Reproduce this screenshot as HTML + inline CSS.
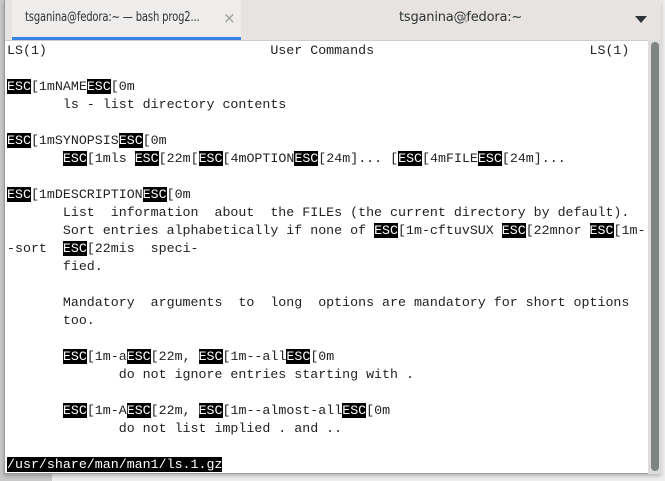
<!DOCTYPE html>
<html><head><meta charset="utf-8"><style>
html,body{margin:0;padding:0;width:665px;height:481px;overflow:hidden;background:#c9c9c9;position:relative}
.doc{position:absolute;left:52px;top:0;width:613px;height:481px;background:#efefef}
.win{position:absolute;left:4px;top:0;width:657px;height:474px;background:#fff;border:1px solid #9a9a9a;border-top:none;box-sizing:border-box;box-shadow:0 2px 4px rgba(0,0,0,.25)}
.tabs{position:absolute;left:0;top:0;width:656px;height:40px;background:#e6e3e0;border-bottom:1px solid #d0ccc8;font-family:"DejaVu Sans",sans-serif;font-size:13px;color:#2e3436}
.tab1{position:absolute;left:7px;top:0;width:229px;height:40px;background:#efedeb}
.tab1 .u{position:absolute;left:0;bottom:0;width:229px;height:3px;background:#3584e4}
.t{position:absolute;top:10px;white-space:nowrap;letter-spacing:-0.2px;transform-origin:left center}
.x{position:absolute;top:9px;color:#9a9a9a;font-size:15px;z-index:2}
.arrow{position:absolute;left:630px;top:16px;width:0;height:0;border-left:6px solid transparent;border-right:6px solid transparent;border-top:7px solid #2e3436}
.term{position:absolute;left:2px;top:42px;font-family:"Liberation Mono",monospace;font-size:13.3px;line-height:18px;color:#222;white-space:pre}
.e{background:#000;color:#fff}
.sb{position:absolute;left:643px;top:40px;width:14px;height:434px;background:#dcdcdc}
.th{position:absolute;left:3px;top:2px;width:8px;height:429px;background:#7e8484;border-radius:4px}
</style></head><body>
<div class="doc"></div>
<div class="win">
<div class="tabs">
<div class="tab1"><span class="t" style="left:13px;transform:scaleX(0.77)">tsganina@fedora:~ — bash prog2...</span><div class="u"></div></div>
<span class="x" style="left:218px">×</span>
<span class="t" style="left:394px">tsganina@fedora:~</span><span class="x" style="left:452px">×</span>
<div class="arrow"></div>
</div>
<div class="term">LS(1)                            User Commands                           LS(1)

<span class="e">ESC</span>[1mNAME<span class="e">ESC</span>[0m
       ls - list directory contents

<span class="e">ESC</span>[1mSYNOPSIS<span class="e">ESC</span>[0m
       <span class="e">ESC</span>[1mls <span class="e">ESC</span>[22m[<span class="e">ESC</span>[4mOPTION<span class="e">ESC</span>[24m]... [<span class="e">ESC</span>[4mFILE<span class="e">ESC</span>[24m]...

<span class="e">ESC</span>[1mDESCRIPTION<span class="e">ESC</span>[0m
       List  information  about  the FILEs (the current directory by default).
       Sort entries alphabetically if none of <span class="e">ESC</span>[1m-cftuvSUX <span class="e">ESC</span>[22mnor <span class="e">ESC</span>[1m-
-sort  <span class="e">ESC</span>[22mis  speci‐
       fied.

       Mandatory  arguments  to  long  options are mandatory for short options
       too.

       <span class="e">ESC</span>[1m-a<span class="e">ESC</span>[22m, <span class="e">ESC</span>[1m--all<span class="e">ESC</span>[0m
              do not ignore entries starting with .

       <span class="e">ESC</span>[1m-A<span class="e">ESC</span>[22m, <span class="e">ESC</span>[1m--almost-all<span class="e">ESC</span>[0m
              do not list implied . and ..

<span class="e">/usr/share/man/man1/ls.1.gz</span></div>
<div class="sb"><div class="th"></div></div>
</div>
</body></html>
